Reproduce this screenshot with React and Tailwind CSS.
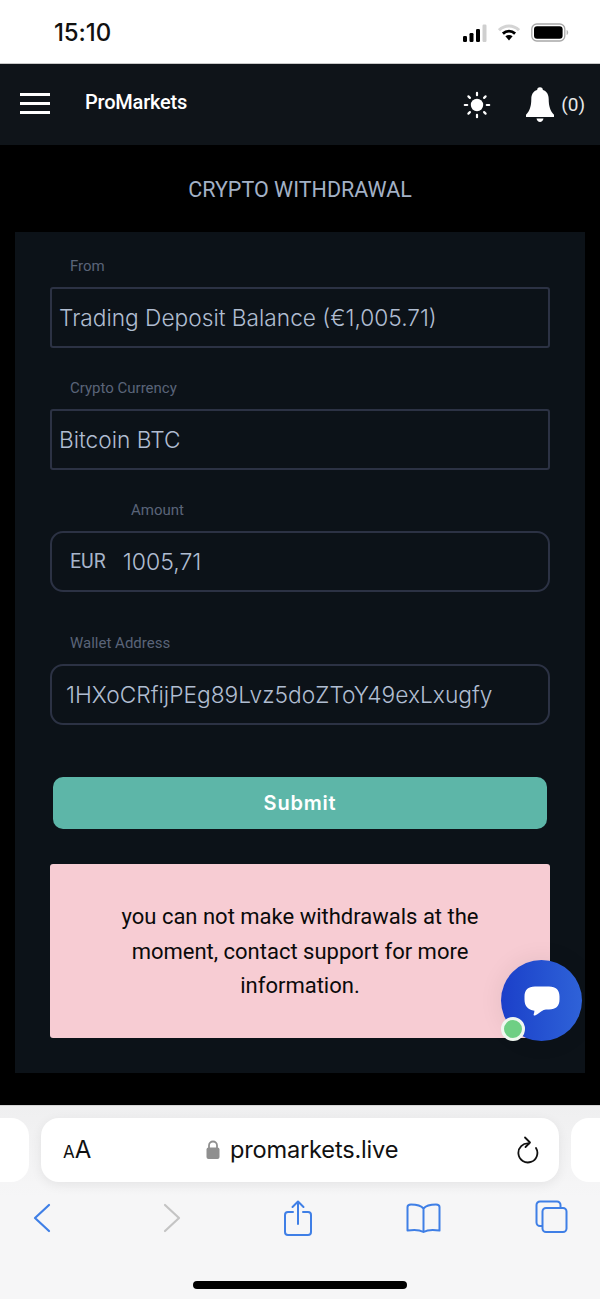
import React from "react";

const plex = "font-['Roboto',sans-serif]";
const inter = "font-['Inter',sans-serif]";

function Signal() {
  return (
    <svg width="25" height="18" viewBox="0 0 25 18" className="block">
      <rect x="1" y="12" width="4" height="6" rx="1.2" fill="#000" />
      <rect x="7.5" y="9" width="4" height="9" rx="1.2" fill="#000" />
      <rect x="14" y="5" width="4" height="13" rx="1.2" fill="#000" />
      <rect x="20.5" y="0.5" width="4" height="17.5" rx="1.2" fill="#cfcfcf" />
    </svg>
  );
}
function Wifi() {
  return (
    <svg width="22" height="18" viewBox="0 0 22 18" className="block">
      <path d="M1 6.2C6.8 .6 15.2 .6 21 6.2" fill="none" stroke="#d4d4d4" strokeWidth="3" />
      <path d="M4.9 9.6c3.6-3.3 8.6-3.3 12.2 0" fill="none" stroke="#000" strokeWidth="2.8" />
      <path d="M7.4 12.2c2.2-1.7 5-1.7 7.2 0L11 16.6z" fill="#000" />
    </svg>
  );
}
function Battery() {
  return (
    <svg width="38" height="19" viewBox="0 0 38 19" className="block">
      <rect x="0.8" y="1" width="33" height="17" rx="5" fill="none" stroke="#a8a8a8" strokeWidth="1.3" />
      <rect x="3" y="3.2" width="28.6" height="12.6" rx="3" fill="#000" />
      <path d="M35.6 7v5c1-.3 1.6-1.3 1.6-2.5S36.6 7.3 35.6 7z" fill="#b5b5b5" />
    </svg>
  );
}
function Sun() {
  return (
    <svg width="28" height="28" viewBox="0 0 28 28" className="block" stroke="#fff" strokeWidth="2.2" strokeLinecap="round">
      <circle cx="14" cy="14" r="6.2" fill="#fff" stroke="none" />
      <path d="M14 1.8v2.4M14 23.8v2.4M1.8 14h2.4M23.8 14h2.4M5.400 5.400l1.500 1.500M21.100 21.100l1.500 1.500M5.400 22.600l1.500-1.500M21.100 6.900l1.500-1.500" />
    </svg>
  );
}
function Bell() {
  return (
    <svg width="28" height="36" viewBox="0 0 28 36" className="block" fill="#fff">
      <circle cx="14" cy="3" r="2.8" />
      <path d="M14 2.5c-5.600 0-8.700 4-8.700 9.500 0 7-1.500 12-5.300 15.800V30h28v-2.200C24.200 24 22.700 19 22.700 12c0-5.500-3.100-9.500-8.700-9.500z" />
      <path d="M10.500 31.500h7c-.4 2-1.800 3.500-3.500 3.500s-3.100-1.500-3.500-3.500z" />
    </svg>
  );
}
function ChatGlyph() {
  return (
    <svg width="36" height="30" viewBox="0 0 36 30" className="block">
      <path d="M11 .5h14C32 .5 35.500 4 35.500 10.500v3C35.500 20 32 23.500 25 23.500h-3c-3 0-6.500 3.500-10.500 5.800-1.200.6-2.200 0-1.800-1.100.4-1.200.7-2.300.7-3.400C4 24 .5 20 .5 13.500v-3C.5 4 4 .5 11 .5z" fill="#fff" />
    </svg>
  );
}

function Label({ children, className = "" }) {
  return <div className={`text-[15px] leading-5 text-[#5a6478] ${plex} ${className}`}>{children}</div>;
}

function Field({ children, rounded, className = "" }) {
  return (
    <div className={`h-[61px] border-2 border-[#2c3244] flex items-center bg-[#0c1218] pt-[1px] ${rounded ? "rounded-[13px]" : "rounded-[3px]"} ${className}`}>
      {children}
    </div>
  );
}

export default function App() {
  return (
    <div className="relative w-[600px] h-[1299px] overflow-hidden bg-black flex flex-col">
      {/* status bar */}
      <div className="h-16 shrink-0 bg-white border-b border-[#c9c9c9] flex items-center justify-between pl-[54px] pr-[31px] pt-[2px]">
        <span className={`text-[24px] font-medium text-[#111] tracking-[-0.1px] ${inter}`}>15:10</span>
        <div className="flex items-center gap-[11px]">
          <Signal />
          <Wifi />
          <Battery />
        </div>
      </div>

      {/* nav */}
      <div className="h-[81px] shrink-0 bg-[#0f1419] flex items-center pl-5 pr-[15px]">
        <div className="w-[30px] flex flex-col gap-[6px] mb-[2px]">
          <div className="h-[3px] bg-white" />
          <div className="h-[3px] bg-white" />
          <div className="h-[3px] bg-white" />
        </div>
        <div className={`ml-[35px] text-[20px] font-medium text-white tracking-[-0.2px] mb-[6px] ${plex}`}>ProMarkets</div>
        <div className="ml-auto flex items-center">
          <Sun />
          <div className="ml-[35px]"><Bell /></div>
          <div className={`ml-[7px] text-[19px] text-[#e8e8e8] mt-[2px] ${plex}`}>(0)</div>
        </div>
      </div>

      {/* title */}
      <div className={`h-[87px] shrink-0 flex items-center justify-center text-[21.5px] text-[#a3b1c6] pt-[4px] ${plex}`}>
        CRYPTO WITHDRAWAL
      </div>

      {/* card */}
      <div className="mx-[15px] h-[841px] shrink-0 bg-[#0c1218] px-[35px] pt-[24px]">
        <Label className="pl-[20px]">From</Label>
        <Field className="mt-[11px] pl-[7px]">
          <span className={`text-[22.7px] font-light text-[#b0bdd1] ${inter}`}>Trading Deposit Balance (€1,005.71)</span>
        </Field>

        <Label className="pl-[20px] mt-[30px]">Crypto Currency</Label>
        <Field className="mt-[11px] pl-[7px]">
          <span className={`text-[22.7px] font-light text-[#b0bdd1] ${inter}`}>Bitcoin BTC</span>
        </Field>

        <Label className="pl-[81px] mt-[30px]">Amount</Label>
        <Field rounded className="mt-[11px] pl-[18px]">
          <span className={`text-[19.5px] text-[#a8b5ca] ${plex}`}>EUR</span>
          <span className={`ml-[17px] text-[23px] font-light text-[#b0bdd1] ${inter}`}>1005,71</span>
        </Field>

        <Label className="pl-[20px] mt-[41px]">Wallet Address</Label>
        <Field rounded className="mt-[11px] pl-[14px]">
          <span className={`text-[22.75px] font-light text-[#b0bdd1] ${inter}`}>1HXoCRfijPEg89Lvz5doZToY49exLxugfy</span>
        </Field>

        <div className={`mt-[52px] mx-[3px] h-[52px] rounded-[10px] bg-[#5db6a8] flex items-center justify-center text-[20px] font-semibold text-white tracking-[0.8px] ${inter}`}>
          Submit
        </div>

        <div className={`mt-[35px] h-[174px] rounded-[3px] bg-[#f7ccd3] flex items-center justify-center text-center px-[60px] pt-[2px] text-[22px] leading-[34.5px] text-[#0a0a0a] ${plex}`}>
          you can not make withdrawals at the moment, contact support for more information.
        </div>
      </div>

      {/* safari bars */}
      <div className="absolute left-0 right-0 bottom-0 h-[194px] bg-[#f6f6f7] border-t border-[#d5d5d5]">
        <div className="h-[90px] bg-gradient-to-b from-[#efeff0] to-[#f6f6f7] flex items-start pt-3 gap-[12px] overflow-hidden">
          <div className="w-[29px] h-[64px] shrink-0 bg-white rounded-r-[18px]" />
          <div className="w-[518px] h-[64px] shrink-0 bg-white rounded-[18px] shadow-[0_3px_12px_rgba(0,0,0,0.07)] flex items-center pl-[22px] pr-[19px]">
            <span className={`text-[#111] ${inter} flex items-baseline`}>
              <span className="text-[17px]">A</span><span className="text-[24px]">A</span>
            </span>
            <div className="flex-1 flex items-center justify-center gap-[10px] pr-[3px]">
              <svg width="14" height="20" viewBox="0 0 14 20" className="block" fill="none">
                <path d="M3 8V5.5a4 4 0 0 1 8 0V8" stroke="#8f8f8f" strokeWidth="1.8" />
                <rect x="0.5" y="7.5" width="13" height="11.5" rx="2" fill="#8f8f8f" />
              </svg>
              <span className={`text-[23.6px] text-[#111] tracking-[-0.2px] ${inter}`}>promarkets.live</span>
            </div>
            <svg width="24" height="28" viewBox="0 0 24 28" className="block" fill="none" stroke="#111" strokeWidth="1.8" strokeLinecap="round" strokeLinejoin="round">
              <path d="M13 7.5A9.500 9.500 0 1 0 20 12" />
              <path d="M9 1.500l5 5-4.500 4.500" />
            </svg>
          </div>
          <div className="w-[40px] h-[64px] shrink-0 bg-white rounded-l-[18px]" />
        </div>

        <div className="h-[60px] flex items-start pl-[33px] pt-[4px]">
          <svg width="18" height="30" viewBox="0 0 18 30" className="mt-[3px] block" fill="none" stroke="#3f7fe6" strokeWidth="2.2" strokeLinecap="round" strokeLinejoin="round">
            <path d="M16 2L2 15l14 13" />
          </svg>
          <svg width="18" height="30" viewBox="0 0 18 30" className="ml-[112px] mt-[3px] block" fill="none" stroke="#c4c4c4" strokeWidth="2.2" strokeLinecap="round" strokeLinejoin="round">
            <path d="M2 2l14 13L2 28" />
          </svg>
          <svg width="28" height="36" viewBox="0 0 28 36" className="ml-[103px] block" fill="none" stroke="#3f7fe6" strokeWidth="2" strokeLinecap="round" strokeLinejoin="round">
            <path d="M9 12H4a3 3 0 0 0-3 3v17a3 3 0 0 0 3 3h20a3 3 0 0 0 3-3V15a3 3 0 0 0-3-3h-5" />
            <path d="M14 24V2M8.500 7L14 1.500 19.500 7" />
          </svg>
          <svg width="35" height="30" viewBox="0 0 35 30" className="ml-[94px] mt-[3px] block" fill="none" stroke="#3f7fe6" strokeWidth="2" strokeLinecap="round" strokeLinejoin="round">
            <path d="M17.500 5.500C15 2.500 11 1.500 5 1.500c-2 0-3.500.8-3.500 2.500v23.500c6-1 11.500-1.200 16 1.500 4.500-2.700 10-2.500 16-1.500V4c0-1.700-1.500-2.500-3.500-2.500-6 0-10 1-12.500 4zM17.500 5.500V29" />
          </svg>
          <svg width="33" height="33" viewBox="0 0 33 33" className="ml-[94px] block" fill="none" stroke="#3f7fe6" strokeWidth="2" strokeLinejoin="round">
            <path d="M7 26H5a3.500 3.500 0 0 1-3.500-3.500V5A3.500 3.500 0 0 1 5 1.500h17A3.500 3.500 0 0 1 25.500 5v2" />
            <rect x="7.500" y="8" width="24" height="24" rx="3.500" />
          </svg>
        </div>
        <div className="mt-[25px] mx-auto w-[214px] h-[8px] rounded-full bg-black" />
      </div>

      {/* chat */}
      <div className="absolute left-[501px] top-[960px] w-[81px] h-[81px] rounded-full bg-gradient-to-r from-[#1c3fc9] to-[#2f62d8] flex items-center justify-center shadow-[0_0_24px_rgba(0,0,0,0.08)]">
        <div className="ml-[1px]"><ChatGlyph /></div>
      </div>
      <div className="absolute left-[501px] top-[1017px] w-[24px] h-[24px] rounded-full bg-[#6fcf84] border-[3px] border-[#f0f7f0]" />
    </div>
  );
}
